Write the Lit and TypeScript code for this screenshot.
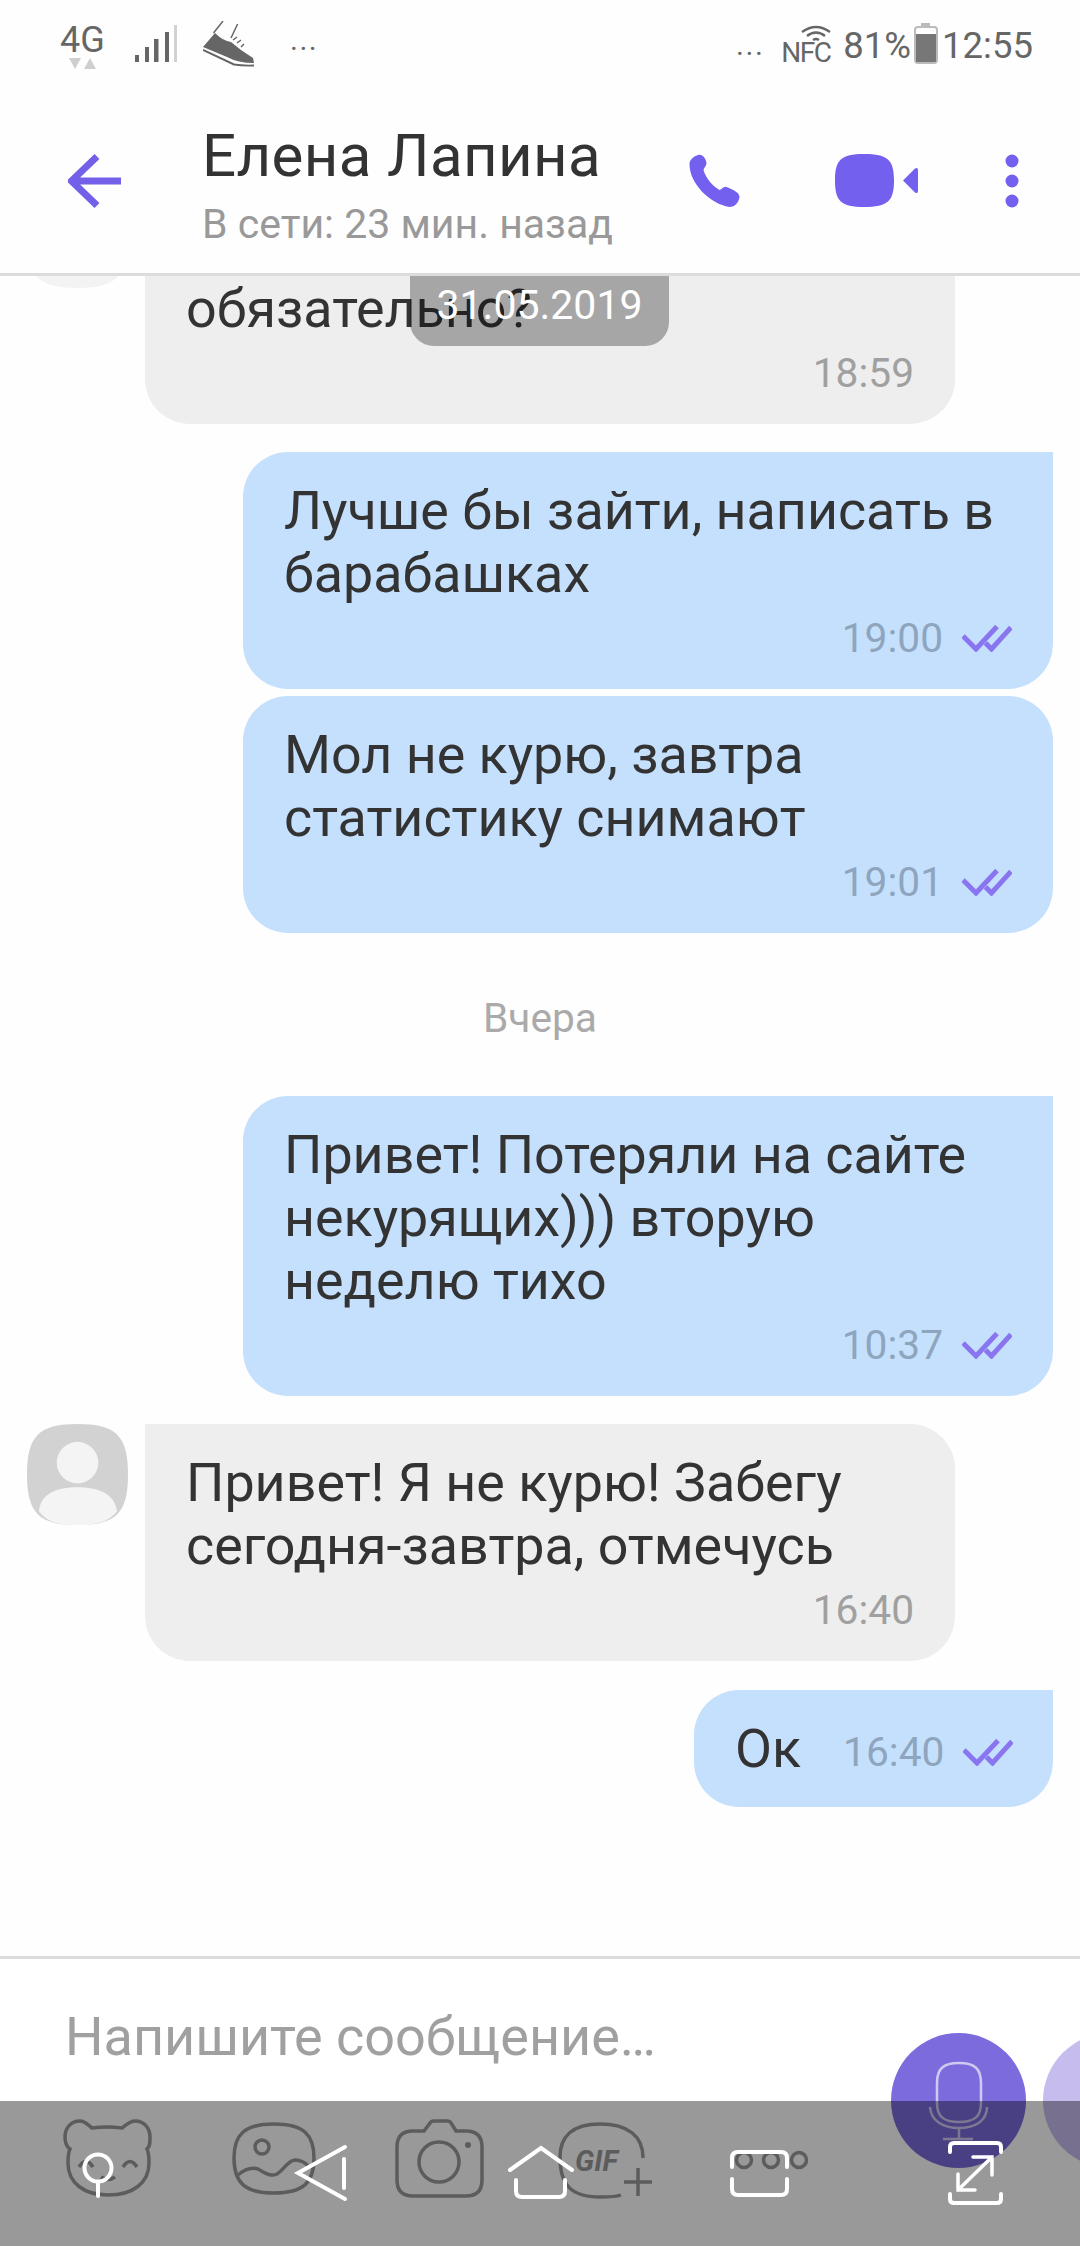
import { LitElement, html, css, svg } from "lit";
import { customElement } from "lit/decorators.js";

const checks = svg`<svg class="chk" viewBox="0 0 50 27" width="50" height="27"><path d="M1 11 L14 24 L35 1.500" fill="none" stroke="#8a75f0" stroke-width="5"/><path d="M23.500 18 L29.500 24 L49 2.500" fill="none" stroke="#8a75f0" stroke-width="5"/></svg>`;

@customElement("app-root")
export class AppRoot extends LitElement {
  static styles = css`
    :host { display: block; width: 1080px; height: 2246px; background: #fefefe; font-family: Roboto, "Noto Sans", sans-serif; position: relative; overflow: hidden; color: #333; }
    .page { display: flex; flex-direction: column; height: 2246px; }
    .status { height: 86px; display: flex; justify-content: space-between; flex: none; color: #666; padding: 0 47px 0 60px; position: relative; }
    .status-l, .status-r { display: flex; align-items: flex-start; }
    .net { width: 45px; font-size: 36px; line-height: 38px; margin-top: 21px; }
    .net svg { display: block; margin: -1px 0 0 9px; }
    .bars { margin: 25px 0 0 30px; }
    .shoe { margin: 21px 0 0 26px; }
    .dots-l { font-size: 30px; margin: 22px 0 0 36px; line-height: 36px; letter-spacing: 1.500px; }
    .dots-r { font-size: 30px; margin: 27px 0 0 0; line-height: 36px; letter-spacing: 1.500px; }
    .nfc { width: 50px; margin: 25px 0 0 17px; }
    .nfc svg { display: block; margin-left: 20px; }
    .nfc span { display: block; font-size: 28px; line-height: 24px; margin-top: -4px; letter-spacing: -1.500px; white-space: nowrap; }
    .pct { font-size: 36.500px; line-height: 38px; margin: 27px 0 0 12px; }
    .batt { margin: 23px 0 0 3px; }
    .clock { font-size: 36.500px; line-height: 38px; margin: 27px 0 0 4px; }
    .header { height: 190px; flex: none; display: flex; border-bottom: 3px solid #dcdcdc; box-sizing: border-box; position: relative; background: #fefefe; z-index: 2; }
    .back { margin: 68px 80px 0 68px; flex: none; }
    .titles { width: 486px; flex: none; }
    .name { font-size: 60px; line-height: 62px; margin-top: 39px; color: #333; letter-spacing: 0.4px; }
    .sub { font-size: 41px; line-height: 44px; margin-top: 15px; color: #999; }
    .acts { display: flex; align-items: flex-start; padding-top: 68px; }
    .acts svg { display: block; }
    .video { margin-left: 94px; }
    .more { margin-left: 87px; }
    .chat { flex: 1; min-height: 0; overflow: hidden; display: flex; flex-direction: column; position: relative; background: #fefefe; }
    .row { display: flex; flex: none; }
    .row.me { justify-content: flex-end; padding-right: 27px; }
    .row.them { padding-left: 27px; }
    .first { margin-top: -89px; }
    .g28a { margin-top: 28px; } .g7 { margin-top: 7px; } .g29 { margin-top: 29px; } .g28 { margin-top: 28px; }
    .ava { width: 101px; height: 101px; margin-right: 17px; flex: none; display: block; }
    .bubble { box-sizing: border-box; width: 810px; padding: 27px 41px 26px 41px; border-radius: 45px; font-size: 53.800px; line-height: 63px; white-space: nowrap; }
    .me .bubble { background: #c5e0fd; }
    .them .bubble { background: #eeeeee; }
    .me .bubble.tail { border-top-right-radius: 0; }
    .them .bubble.tail { border-top-left-radius: 0; }
    .blank { height: 63px; }
    .meta { display: flex; justify-content: flex-end; align-items: center; height: 50px; margin-top: 8px; }
    .t { font-size: 40.700px; line-height: 50px; }
    .me .t { color: #8ea5bd; margin-right: 19px; }
    .them .t { color: #a0a0a0; }
    .chk { display: block; flex: none; }
    .me .bubble.ok { width: 359px; display: flex; align-items: center; height: 117px; padding: 0 41px 0 41px; }
    .ok .txt { margin-right: 42px; }
    .ok .t, .ok .chk { margin-top: 7px; }
    .day { text-align: center; font-size: 40.700px; line-height: 44px; color: #aaa; margin: 63px 0 56px; flex: none; }
    .pill { position: absolute; left: 410px; top: 0; width: 259px; height: 70px; border-radius: 0 0 24px 24px; background: rgba(0,0,0,.3); color: #fff; font-size: 41px; line-height: 58px; text-align: center; z-index: 1; }
    .composer { flex: none; height: 290px; background: #fff; border-top: 3px solid #dcdcdc; box-sizing: border-box; display: flex; flex-direction: column; }
    .input { height: 142px; flex: none; padding-left: 65px; font-size: 54px; line-height: 156px; color: #a0a0a0; }
    .tools { flex: 1; }
    .tools svg { display: block; }
    .tools text { font-family: Roboto, sans-serif; font-weight: 700; font-style: italic; font-size: 29px; fill: #999; stroke: none; }
    .scrim { position: absolute; left: 0; right: 0; top: 2101px; height: 145px; background: rgba(0,0,0,.4); z-index: 5; }
    .mic { position: absolute; left: 891px; top: 2033px; width: 135px; height: 135px; border-radius: 50%; background: #7b6bdc; z-index: 3; }
    .mic2 { position: absolute; left: 1043px; top: 2033px; width: 135px; height: 135px; border-radius: 50%; background: #c6bdee; z-index: 3; }
    .mic svg { display: block; }
    .navs { position: absolute; left: 0; top: 2101px; z-index: 6; }
  `;

  private bubbleMe(lines: string[], time: string, tail = false) {
    return html`<div class="bubble ${tail ? "tail" : ""}">
      ${lines.map((l) => html`<div>${l}</div>`)}
      <div class="meta"><span class="t">${time}</span>${checks}</div>
    </div>`;
  }

  render() {
    return html`
      <div class="page">
        <div class="status">
          <div class="status-l">
            <div class="net">4G
              <svg width="27" height="11" viewBox="0 0 27 11"><path d="M0 0H12L6 11Z M15 11L21 0L27 11Z" fill="#cfcfcf"/></svg>
            </div>
            <svg class="bars" width="42" height="37" viewBox="0 0 42 37"><g fill="#666"><rect x="0" y="30" width="4" height="7"/><rect x="10" y="22" width="4" height="15"/><rect x="19" y="14" width="4.500" height="23"/><rect x="30" y="7" width="4" height="30"/></g><rect x="39" y="0" width="3.500" height="37" fill="#d2d2d2"/></svg>
            <svg class="shoe" width="51" height="46" viewBox="0 0 51 46"><path d="M10.500 12 L20 0 M28 17 L34.600 3" fill="none" stroke="#666" stroke-width="1.500"/><path d="M0 26 L12 12 Q20 20 28 21 L38 29 L50 37 L51 42 Q35 42 24 36 Z" fill="#666"/><path d="M0 29 L31 43.500 Q40 45 51 44.500" fill="none" stroke="#666" stroke-width="2"/><path d="M30 19 L34 16 M34 22 L38 19 M38 26 L41 23" stroke="#666" stroke-width="1.500"/></svg>
            <div class="dots-l">...</div>
          </div>
          <div class="status-r">
            <div class="dots-r">...</div>
            <div class="nfc">
              <svg width="30" height="20" viewBox="0 0 30 20"><path d="M1 7 Q15 -3 29 7 M6 11 Q15 4 24 11 M12 15 Q15 13 18 15" fill="none" stroke="#666" stroke-width="2.300"/></svg>
              <span>NFC</span>
            </div>
            <div class="pct">81%</div>
            <svg class="batt" width="24" height="41" viewBox="0 0 24 41"><rect x="7" y="0" width="9" height="3" fill="#bbb"/><rect x="1" y="4" width="22" height="36" rx="3" fill="none" stroke="#bbb" stroke-width="2"/><rect x="2" y="11" width="20" height="28" fill="#777"/></svg>
            <div class="clock">12:55</div>
          </div>
        </div>
        <div class="header">
          <svg class="back" width="54" height="54" viewBox="0 0 54 54"><path d="M2 27H53 M29 2.500L3.500 27L29 51.500" fill="none" stroke="#7360e8" stroke-width="7"/></svg>
          <div class="titles">
            <div class="name">Елена Лапина</div>
            <div class="sub">В сети: 23 мин. назад</div>
          </div>
          <div class="acts">
            <svg width="53" height="54" viewBox="0 0 52 54"><path d="M10 1 C14 0 17 4 18 9 C18 12 15 14 15 16 C17 24 25 33 31 36 C33 36 35 32 38 33 C43 35 51 38 51 43 C50 50 45 53 41 53 C22 50 1 30 1 10 C1 6 5 2 10 1Z" fill="#7360ee"/></svg>
            <svg class="video" width="83" height="53" viewBox="0 0 83 53"><path d="M0 26.500 C0 6 6 0 29 0 C53 0 59 6 59 26.500 C59 47 53 53 29 53 C6 53 0 47 0 26.500Z M68 26.500 L80 14.500 Q83 13 83 16 V37 Q83 40 80 38.500Z" fill="#7360ee"/></svg>
            <svg class="more" width="14" height="54" viewBox="0 0 14 54"><circle cx="7" cy="7" r="6.500" fill="#7360ee"/><circle cx="7" cy="27" r="6.500" fill="#7360ee"/><circle cx="7" cy="47" r="6.500" fill="#7360ee"/></svg>
          </div>
        </div>
        <div class="chat">
          <div class="pill">31.05.2019</div>
          <div class="row them first">
            <svg class="ava" viewBox="0 0 102 102"><path d="M51 0C90 0 102 12 102 51C102 90 90 102 51 102C12 102 0 90 0 51C0 12 12 0 51 0Z" fill="#f3f3f3"/></svg>
            <div class="bubble">
              <div class="blank"></div>
              <div>обязательно?</div>
              <div class="meta"><span class="t">18:59</span></div>
            </div>
          </div>
          <div class="row me g28a">${this.bubbleMe(["Лучше бы зайти, написать в", "барабашках"], "19:00", true)}</div>
          <div class="row me g7">${this.bubbleMe(["Мол не курю, завтра", "статистику снимают"], "19:01")}</div>
          <div class="day">Вчера</div>
          <div class="row me">${this.bubbleMe(["Привет! Потеряли на сайте", "некурящих))) вторую", "неделю тихо"], "10:37", true)}</div>
          <div class="row them g28">
            <svg class="ava" viewBox="0 0 102 102"><path d="M51 0C90 0 102 12 102 51C102 90 90 102 51 102C12 102 0 90 0 51C0 12 12 0 51 0Z" fill="#d2d2d2"/><circle cx="51" cy="39" r="21" fill="#f4f4f4"/><path d="M12 88C14 70 30 64 51 64C72 64 88 70 91 88C82 99 70 102 51 102C32 102 20 99 12 88Z" fill="#f4f4f4"/></svg>
            <div class="bubble tail">
              <div>Привет! Я не курю! Забегу</div>
              <div>сегодня-завтра, отмечусь</div>
              <div class="meta"><span class="t">16:40</span></div>
            </div>
          </div>
          <div class="row me g29"><div class="bubble tail ok"><span class="txt">Ок</span><span class="t">16:40</span>${checks}</div></div>
        </div>
        <div class="composer">
          <div class="input">Напишите сообщение…</div>
          <div class="tools">
            <svg width="1080" height="145" viewBox="0 0 1080 145" fill="none" stroke="#999" stroke-width="3.500">
              <path d="M92 27 C88 24 85 20 80 20 C70 20 65 28 65 36 C65 42 67 46 70 48 C68 52 68 56 68 62 C68 82 84 94 108 94 C133 94 149 82 149 62 C149 56 149 52 147 48 C150 46 150 42 150 36 C150 28 145 20 135 20 C130 20 126 24 122 27 C114 26 100 26 92 27Z"/>
              <path d="M79 66 Q86 55 93 66 M123 66 Q130 55 137 66 M101 76 Q108 81 115 76"/>
              <path d="M274 23 C245 23 234 33 234 57 C234 82 245 92 274 92 C303 92 314 82 314 57 C314 33 303 23 274 23Z"/>
              <circle cx="262" cy="46" r="7"/>
              <path d="M238 74 C245 68 252 66 258 68 C265 72 270 76 277 73 C284 69 287 60 295 59 C301 59 305 61 309 66"/>
              <path d="M413 30 H424 L430 22 Q431 20 434 20 H447 Q450 20 451 22 L456 30 H466 Q482 30 482 46 V79 Q482 95 466 95 H413 Q397 95 397 79 V46 Q397 30 413 30Z"/>
              <circle cx="439" cy="61" r="20"/>
              <circle cx="468" cy="44" r="3" fill="#999" stroke="none"/>
              <path d="M643 57 C643 35 628 23 600 23 C572 23 560 36 560 56 C560 85 572 96 600 96 C610 96 616 96 621 94"/>
              <path d="M638 67 V95 M624 81 H652"/>
              <text x="575" y="70">GIF</text>
              <circle cx="744" cy="59" r="7.500"/>
              <circle cx="771" cy="59" r="7.500"/>
              <circle cx="799" cy="59" r="7.500"/>
            </svg>
          </div>
        </div>
      </div>
      <div class="mic"><svg width="135" height="135" viewBox="0 0 135 135" fill="none" stroke="#cfc9f2" stroke-width="2.500"><path d="M68 30 C52 30 46 36 46 50 V70 C46 83 52 89 68 89 C84 89 90 83 90 70 V50 C90 36 84 30 68 30Z"/><path d="M39 74 C40 88 52 95 68 95 C84 95 96 88 96 74 M68 95 V105 M52 106 H82"/></svg></div>
      <div class="mic2"></div>
      <div class="scrim"></div>
      <svg class="navs" width="1080" height="145" viewBox="0 0 1080 145" fill="none" stroke="#fff" stroke-width="4" stroke-linecap="round">
        <circle cx="98" cy="67" r="13.500"/><path d="M98 81 V95"/>
        <path d="M345 46 L298 72 L345 98 M344 58 V87"/>
        <path d="M510 69 L541 47 L572 69 M516 79 V90 Q516 96 522 96 H559 Q565 96 565 90 V79"/>
        <path d="M732 66 V57 Q732 51 738 51 H781 Q787 51 787 57 V66 M732 78 V88 Q732 94 738 94 H781 Q787 94 787 88 V78"/>
        <path d="M950 51 V46 Q950 42 954 42 H997 Q1001 42 1001 46 V51 M950 93 V98 Q950 102 954 102 H997 Q1001 102 1001 98 V93"/>
        <path d="M958 89 L992 56 M958 73 V89 H975 M973 56 H992 V74" stroke-width="3.500"/>
      </svg>
    `;
  }
}
